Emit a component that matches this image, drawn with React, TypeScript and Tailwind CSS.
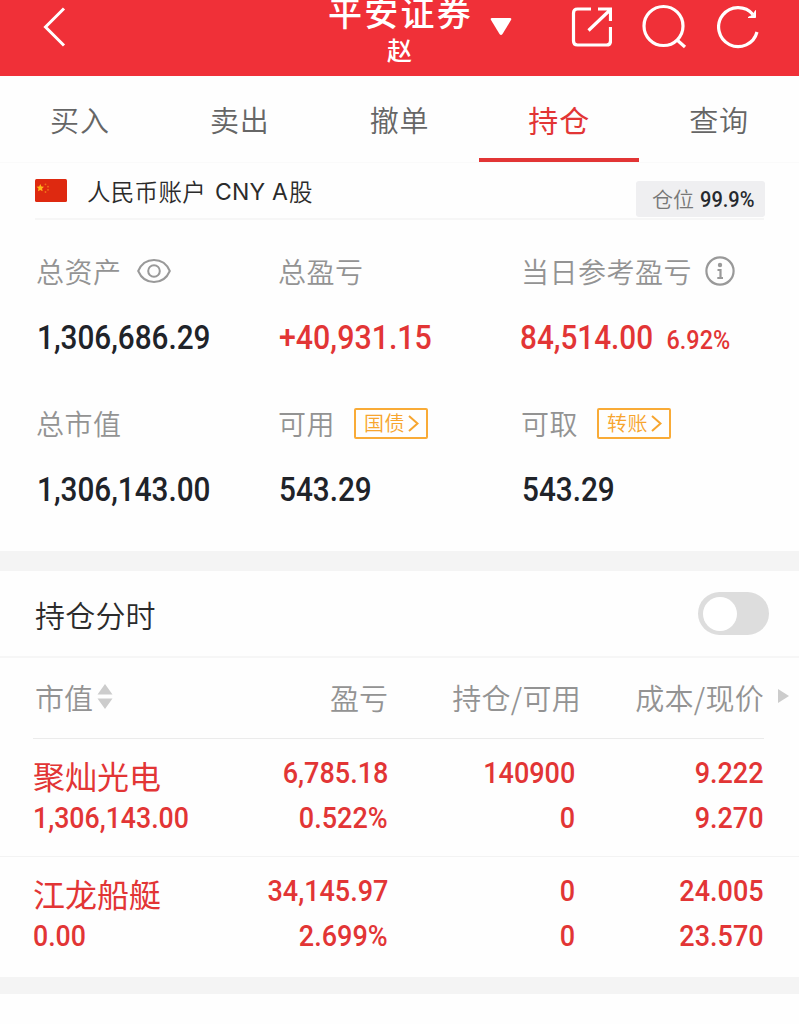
import type { ReactNode } from "react";
import clsx from "clsx";

const tabs = ["买入", "卖出", "撤单", "持仓", "查询"];

const holdings = [
  {
    name: "聚灿光电",
    marketValue: "1,306,143.00",
    profit: "6,785.18",
    profitRate: "0.522%",
    shares: "140900",
    available: "0",
    cost: "9.222",
    price: "9.270",
  },
  {
    name: "江龙船艇",
    marketValue: "0.00",
    profit: "34,145.97",
    profitRate: "2.699%",
    shares: "0",
    available: "0",
    cost: "24.005",
    price: "23.570",
  },
];

const Num = ({
  children,
  className,
}: {
  children: ReactNode;
  className?: string;
}) => (
  <span
    className={clsx(
      "inline-block whitespace-nowrap font-['Roboto',sans-serif] font-medium",
      className
    )}
  >
    {children}
  </span>
);

const Header = () => (
  <header className="flex h-[76px] items-start overflow-hidden bg-[#f03038] text-white">
    <svg className="ml-[42px] mt-[6px] h-[42px] w-[24px] shrink-0" viewBox="0 0 24 42" fill="none" stroke="currentColor" strokeWidth="3">
      <path d="M22 2.500 3.500 21 22 39.500" />
    </svg>
    <div className="ml-[262px] flex w-[143px] shrink-0 flex-col items-center">
      <h1 className="-mt-[6px] h-[36px] whitespace-nowrap pl-[2px] text-[34px] font-medium leading-[36px] tracking-[2.300px]">
        平安证券
      </h1>
      <p className="mt-[5px] text-[25px] font-medium leading-[29px]">赵</p>
    </div>
    <svg className="ml-[19px] mt-[17px] h-[19px] w-[22px] shrink-0" viewBox="0 0 22 19" fill="currentColor">
      <path d="M2 1h18q2 0 1 2L12.500 17q-1.500 2-3 0L1 3Q0 1 2 1z" />
    </svg>
    <svg className="ml-[59px] mt-[6px] h-[42px] w-[41px] shrink-0" viewBox="0 0 41 42" fill="none" stroke="currentColor" strokeWidth="3.200">
      <path d="M20 3H6.500Q2.500 3 2.500 7V35Q2.500 39 6.500 39H35.500Q39.500 39 39.500 35V21" />
      <path d="M17.500 24.500 39 4M27 3H39.500V15" />
    </svg>
    <svg className="ml-[30px] mt-[4px] h-[45px] w-[45px] shrink-0" viewBox="0 0 45 45" fill="none" stroke="currentColor" strokeWidth="3.200">
      <circle cx="21.500" cy="22" r="19.500" />
      <path d="m34.500 35.500 8.500 7.500" />
    </svg>
    <svg className="ml-[30px] mt-[4px] h-[45px] w-[45px] shrink-0" viewBox="0 0 45 45" fill="none" stroke="currentColor" strokeWidth="3.200">
      <path d="M40 28A19.500 19.500 0 1 1 36 10.500" />
      <path d="M38.500 6.500v7h-7.500l5-2.500z" fill="currentColor" strokeWidth="1" />
    </svg>
  </header>
);

const Tabs = () => (
  <nav className="flex h-[87px] border-b border-[#fafafa]">
    {tabs.map((tab) => (
      <div
        key={tab}
        className={clsx(
          "flex flex-1 justify-center border-b-4 pt-[21px] leading-[44px]",
          tab === "持仓"
            ? "border-[#e23535] text-[30px] tracking-[1px] text-[#e23535]"
            : "border-transparent text-[29px] font-[350] tracking-[0.8px] text-[#666666]"
        )}
      >
        {tab}
      </div>
    ))}
  </nav>
);

const Flag = () => (
  <svg className="h-[23px] w-[32px]" viewBox="0 0 32 23">
    <rect width="32" height="23" rx="1.500" fill="#de2910" />
    <path d="m5.300 5 1.100 2.500 2.600.3-1.900 1.800.5 2.600-2.300-1.300L3 12.200l.5-2.600-1.900-1.800 2.600-.3z" fill="#ffb81a" />
    <g fill="#f0701a">
      <circle cx="10.500" cy="5.300" r=".9" />
      <circle cx="13" cy="7.700" r=".9" />
      <circle cx="13" cy="10.800" r=".9" />
      <circle cx="10.500" cy="13" r=".9" />
    </g>
  </svg>
);

const AccountBar = () => (
  <div className="mx-[35px] flex h-[57px] items-start border-b-2 border-[#f6f6f6]">
    <div className="mt-[16px]">
      <Flag />
    </div>
    <p className="ml-[20px] mt-[10px] flex whitespace-pre text-[23.500px] font-[350] leading-[36px] tracking-[0.300px] text-[#2b2b2b]">
      人民币账户
      <span className="pl-[9px] pr-px pt-px font-['Inter',sans-serif] text-[23px] font-normal tracking-[0.200px]">
        CNY A
      </span>
      股
    </p>
    <div className="-mr-px ml-auto mt-[18px] flex h-[36px] w-[129px] items-center rounded-[3px] bg-[#efeff1] pl-[16px] text-[21px] text-[#777777]">
      <span className="font-[350]">仓位</span>
      <Num className="ml-[6px] w-[56px] origin-left scale-x-[0.89] pt-px text-[22.500px] text-[#26292e]">
        99.9%
      </Num>
    </div>
  </div>
);

const EyeIcon = () => (
  <svg className="ml-[15px] h-[26px] w-[34px]" viewBox="0 0 34 26" fill="none" stroke="#999999" strokeWidth="2">
    <path d="M1.200 13C4 6.500 9.500 2 17 2S30 6.500 32.800 13C30 19.500 24.500 24 17 24S4 19.500 1.200 13z" />
    <circle cx="17" cy="13" r="5.800" />
  </svg>
);

const InfoIcon = () => (
  <svg className="ml-[13px] h-[30px] w-[30px]" viewBox="0 0 30 30" fill="none" stroke="#999999" strokeWidth="2.200">
    <circle cx="15" cy="15" r="13.600" />
    <circle cx="15" cy="9" r="2.200" fill="#999999" stroke="none" />
    <path d="M12.500 14H15.500V22M12.300 22H18" />
  </svg>
);

const LinkTag = ({ label }: { label: string }) => (
  <span className="ml-[19px] flex h-[31px] w-[74px] items-center rounded-[2px] border-2 border-[#f9ab37] pl-[8px] text-[20px] leading-none text-[#f7a52e]">
    {label}
    <svg className="ml-[3px] h-[17px] w-[11px]" viewBox="0 0 11 17" fill="none" stroke="currentColor" strokeWidth="2">
      <path d="m1 1 8.500 7.500L1 16" />
    </svg>
  </span>
);

const Metric = ({
  label,
  value,
  extra,
  note,
  red,
}: {
  label: string;
  value: string;
  extra?: ReactNode;
  note?: string;
  red?: boolean;
}) => (
  <div>
    <div className="flex h-[40px] items-center whitespace-nowrap text-[28px] font-[350] leading-[40px] tracking-[0.500px] text-[#939393]">
      {label}
      {extra}
    </div>
    <div
      className={clsx(
        "mt-[27px] h-[40px] whitespace-nowrap pl-px leading-[40px]",
        red ? "text-[#e23535]" : "text-[#202329]"
      )}
    >
      <Num
        className={clsx(
          "origin-left text-[33px]",
          value.startsWith("+") ? "scale-x-[0.92]" : "scale-x-[0.9]",
          note && "-ml-[2px]"
        )}
      >
        {value}
        {note && <span className="ml-[15px] text-[26px]">{note}</span>}
      </Num>
    </div>
  </div>
);

const Summary = () => (
  <section className="h-[331px] pl-[36px] pt-[31px]">
    <div className="grid grid-cols-[242px_243px_1fr]">
      <Metric label="总资产" value="1,306,686.29" extra={<EyeIcon />} />
      <Metric label="总盈亏" value="+40,931.15" red />
      <Metric label="当日参考盈亏" value="84,514.00" note="6.92%" extra={<InfoIcon />} red />
    </div>
    <div className="mt-[45px] grid grid-cols-[242px_243px_1fr]">
      <Metric label="总市值" value="1,306,143.00" />
      <Metric label="可用" value="543.29" extra={<LinkTag label="国债" />} />
      <Metric label="可取" value="543.29" extra={<LinkTag label="转账" />} />
    </div>
  </section>
);

const ToggleRow = () => (
  <div className="flex h-[87px] items-center justify-between border-b-2 border-[#f6f6f6] pl-[35px] pr-[30px]">
    <span className="pt-px text-[30px] font-[350] tracking-[0.200px] text-[#2b2b2b]">持仓分时</span>
    <div className="h-[43px] w-[71px] rounded-full bg-[#dddddd] p-[4.500px]">
      <div className="h-[34px] w-[34px] rounded-full bg-white" />
    </div>
  </div>
);

const columns = "grid grid-cols-[187px_168px_187px_189px]";

const TableHead = () => (
  <div className="flex h-[81px] pl-[33px] text-[29px] font-[350] text-[#939393]">
    <div className={clsx(columns, "items-center border-b border-[#ebebeb] pb-[3px] text-right leading-[40px]")}>
      <div className="flex items-center pl-[2px]">
        市值
        <svg className="ml-[4px] h-[25px] w-[16px]" viewBox="0 0 16 25" fill="#cccccc">
          <path d="M8 0l7.500 10.500H.5zM8 25l7.500-10.500H.5z" />
        </svg>
      </div>
      <div>盈亏</div>
      <div className="-mr-[6px] whitespace-nowrap tracking-[0.300px]">持仓/可用</div>
      <div className="tracking-[0.300px]">成本/现价</div>
    </div>
    <svg className="ml-[13px] mt-[31px] h-[14px] w-[12px]" viewBox="0 0 12 14" fill="#cccccc">
      <path d="M1 0l11 7-11 7z" />
    </svg>
  </div>
);

const Cell = ({ top, bottom }: { top: string; bottom: string }) => (
  <div className="flex flex-col items-end text-[30px] leading-[44.500px]">
    <Num className="origin-right scale-x-[0.9]">{top}</Num>
    <Num className="origin-right scale-x-[0.9]">{bottom}</Num>
  </div>
);

const Holdings = () => (
  <div className="text-[#e23535]">
    {holdings.map((item, index) => (
      <div
        key={item.name}
        className={clsx(
          columns,
          "pl-[33px] pt-[12px]",
          index === 0 ? "h-[118px] border-b border-[#f3f3f3]" : "h-[120px]"
        )}
      >
        <div className="flex flex-col items-start whitespace-nowrap">
          <div className="h-[44.500px] pt-[2px] text-[32px] leading-[44px]">{item.name}</div>
          <Num className="origin-left scale-x-[0.89] text-[30px] leading-[44.500px]">
            {item.marketValue}
          </Num>
        </div>
        <Cell top={item.profit} bottom={item.profitRate} />
        <Cell top={item.shares} bottom={item.available} />
        <Cell top={item.cost} bottom={item.price} />
      </div>
    ))}
  </div>
);

const App = () => {
  return (
    <main className="h-[1024px] w-[799px] overflow-hidden bg-[#fefefe] font-['Noto_Sans_CJK_SC',sans-serif]">
      <Header />
      <Tabs />
      <AccountBar />
      <Summary />
      <div className="h-[20px] bg-[#f4f4f4]" />
      <ToggleRow />
      <TableHead />
      <Holdings />
      <div className="h-[17px] bg-[#f4f4f4]" />
    </main>
  );
};
export default App;
